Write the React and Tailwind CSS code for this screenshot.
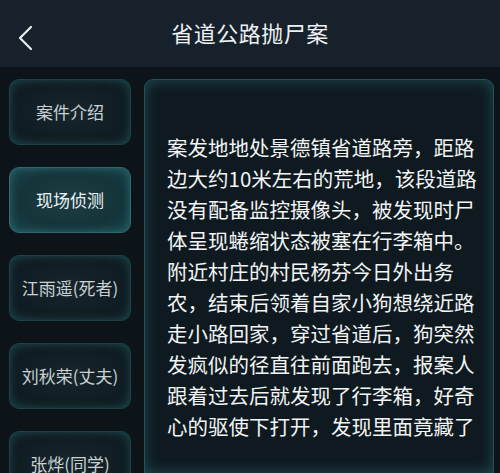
import React from "react";

const tabs = ["案件介绍", "现场侦测", "江雨遥(死者)", "刘秋荣(丈夫)", "张烨(同学)"];

const story =
  "案发地地处景德镇省道路旁，距路边大约10米左右的荒地，该段道路没有配备监控摄像头，被发现时尸体呈现蜷缩状态被塞在行李箱中。附近村庄的村民杨芬今日外出务农，结束后领着自家小狗想绕近路走小路回家，穿过省道后，狗突然发疯似的径直往前面跑去，报案人跟着过去后就发现了行李箱，好奇心的驱使下打开，发现里面竟藏了";

const TabButton = ({ label, active }) => (
  <button
    className={`w-[122px] h-[66px] shrink-0 rounded-[10px] border flex items-center justify-center text-[17px] ${
      active
        ? "border-[#2f6a70] bg-[radial-gradient(ellipse_at_center,#1d3d44_0%,#14343a_60%,#174249_100%)] text-[#eef2f3] shadow-[inset_0_0_10px_rgba(70,160,170,0.45)]"
        : "border-[#1e4148] bg-[radial-gradient(ellipse_at_center,#17262c_0%,#0f1c21_70%,#11262b_100%)] text-[#c9d1d4] shadow-[inset_0_0_9px_rgba(50,130,140,0.4)]"
    }`}
  >
    {label}
  </button>
);

export default function App() {
  return (
    <div
      className="w-[500px] h-[473px] overflow-hidden bg-[#0c141a] flex flex-col"
      style={{ fontFamily: '"Noto Sans CJK SC", "Noto Sans", sans-serif' }}
    >
      <div className="h-[67px] shrink-0 bg-[#16212c] relative flex items-center justify-center">
        <svg
          className="absolute left-[16px] top-[25px]"
          width="20"
          height="26"
          viewBox="0 0 20 26"
          fill="none"
          stroke="#e8ecef"
          strokeWidth="2.2"
          strokeLinecap="round"
          strokeLinejoin="round"
        >
          <path d="M15 2 L4 13 L15 24" />
        </svg>
        <h1 className="text-[22px] text-[#eef1f3] tracking-[0.5px] -mt-[2px]">省道公路抛尸案</h1>
      </div>

      <div className="flex flex-1 min-h-0 pt-[12px] pl-[9px] pr-[6px] gap-[13px]">
        <div className="flex flex-col gap-[22px]">
          {tabs.map((t, i) => (
            <TabButton key={t} label={t} active={i === 1} />
          ))}
        </div>

        <div className="flex-1 rounded-t-[9px] border border-b-0 border-[#22515a] bg-[#0f1a20] shadow-[inset_0_0_14px_rgba(50,140,150,0.45)] pl-[22px] pr-[14px] pt-[52px]">
          <p className="text-[20.5px] leading-[31px] text-[#f2f4f5] break-all">{story}</p>
        </div>
      </div>
    </div>
  );
}
